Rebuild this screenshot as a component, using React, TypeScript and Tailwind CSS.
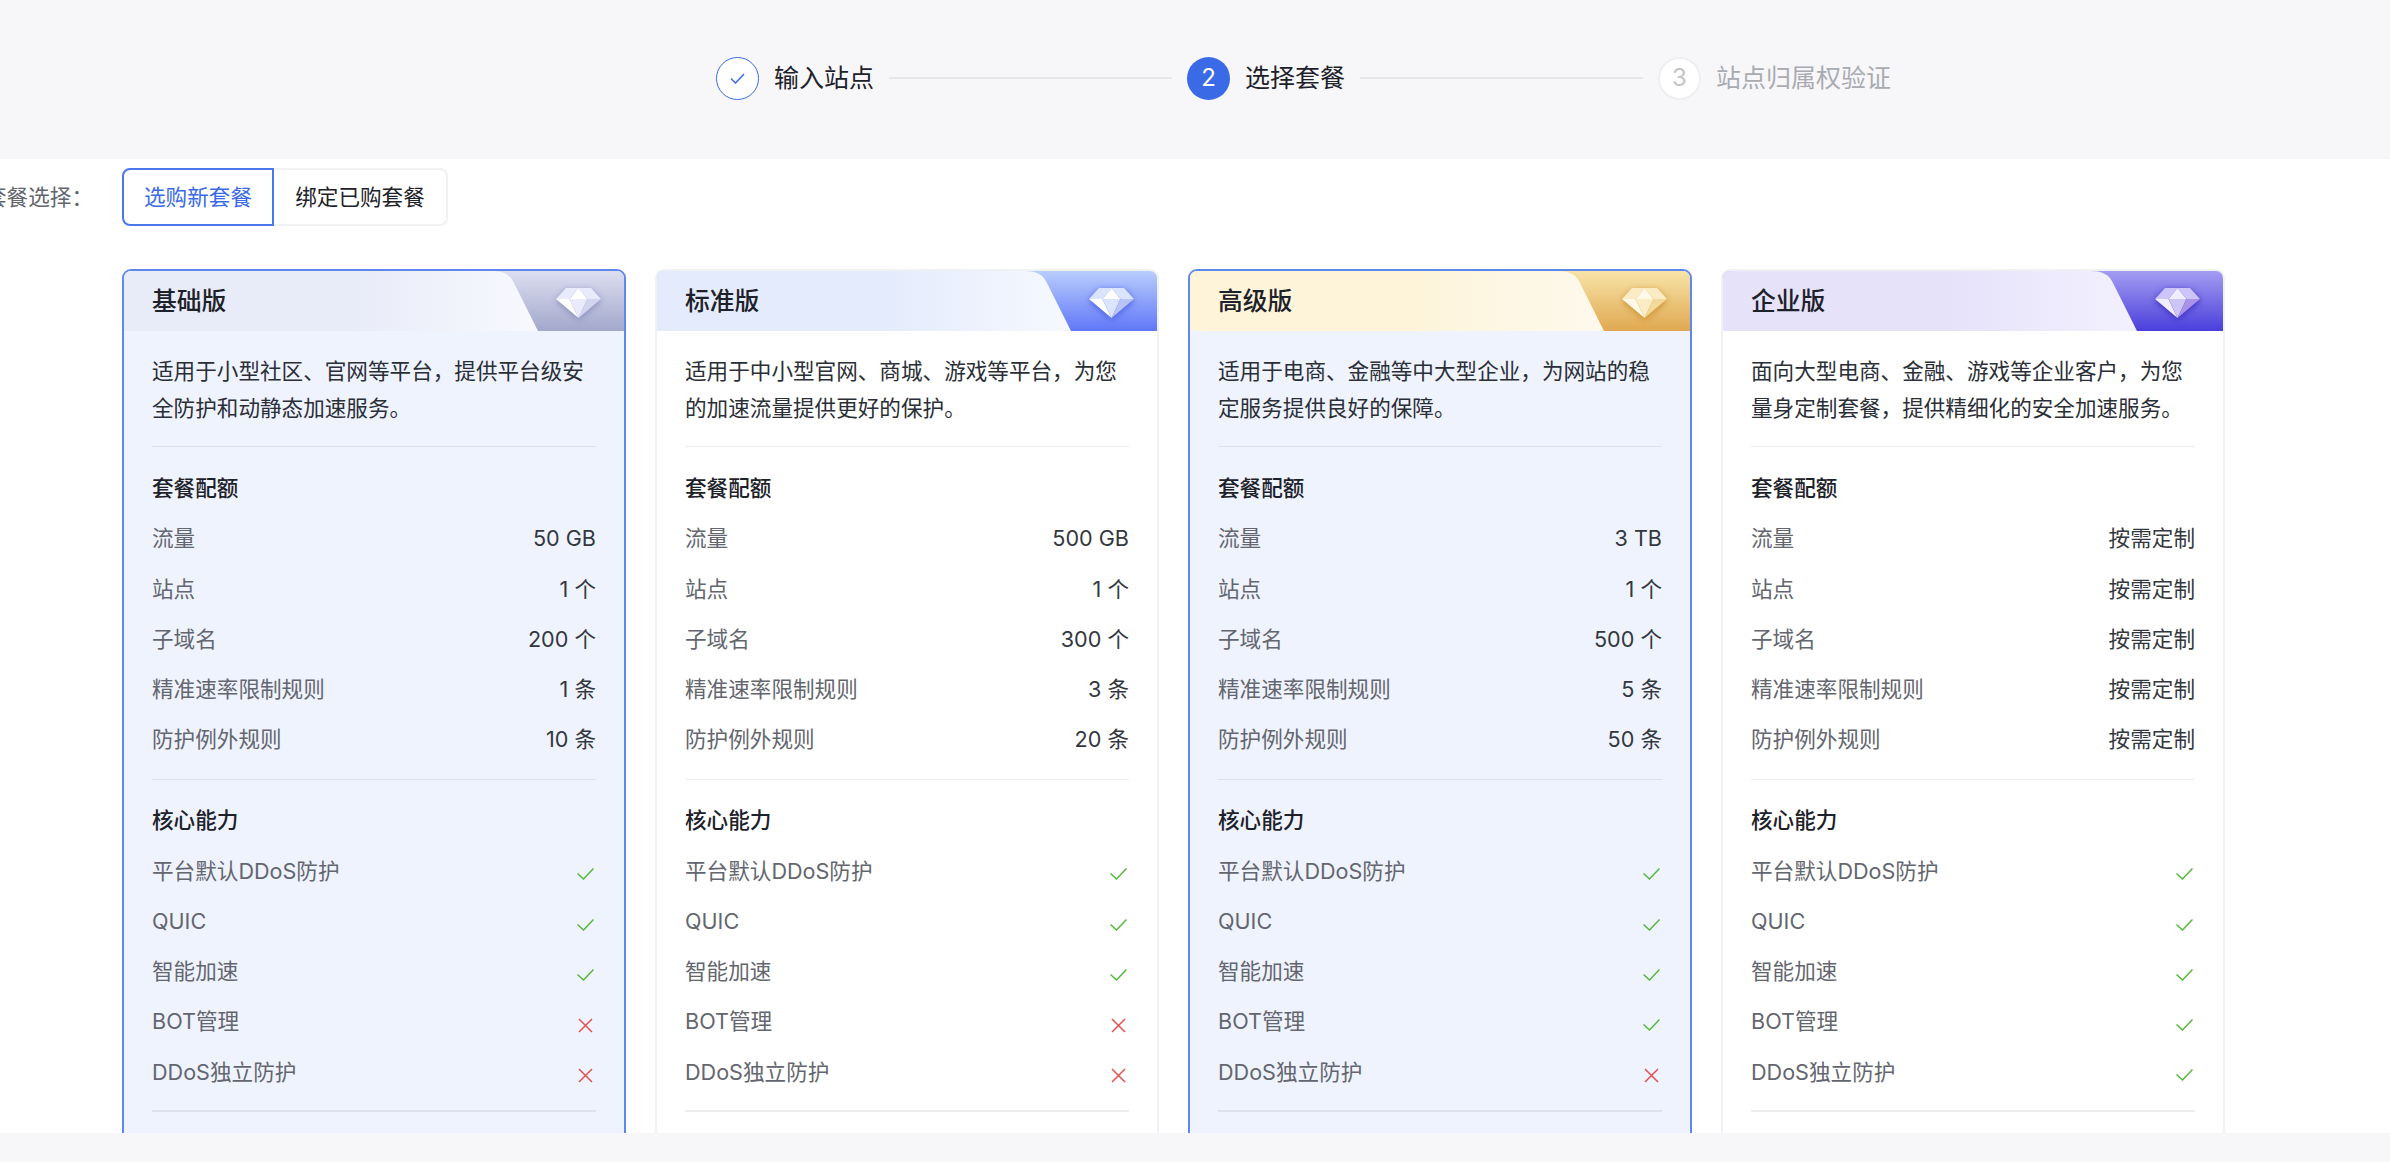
const FONT = "font-['Inter','Noto_Sans_CJK_SC',sans-serif]"

interface Plan {
  id: string
  name: string
  desc: string[]
  selected: boolean
  quota: string[]
  caps: boolean[]
  leftFrom: string
  leftTo: string
  cornerTop: string
  cornerBottom: string
  gemLight: string
  gemMid: string
  gemDark: string
  gemShadow: string
}

const plans: Plan[] = [
  {
    id: 'basic',
    name: '基础版',
    desc: ['适用于小型社区、官网等平台，提供平台级安', '全防护和动静态加速服务。'],
    selected: true,
    quota: ['50 GB', '1 个', '200 个', '1 条', '10 条'],
    caps: [true, true, true, false, false],
    leftFrom: '#e8ebf8',
    leftTo: '#f8f9fe',
    cornerTop: '#dcdef0',
    cornerBottom: '#a3a8cb',
    gemLight: '#ffffff',
    gemMid: '#e9eafc',
    gemDark: '#d3d5ee',
    gemShadow: '#8a8fc0',
  },
  {
    id: 'standard',
    name: '标准版',
    desc: ['适用于中小型官网、商城、游戏等平台，为您', '的加速流量提供更好的保护。'],
    selected: false,
    quota: ['500 GB', '1 个', '300 个', '3 条', '20 条'],
    caps: [true, true, true, false, false],
    leftFrom: '#e4ebfc',
    leftTo: '#f6f9ff',
    cornerTop: '#b9cdfc',
    cornerBottom: '#6077f8',
    gemLight: '#ffffff',
    gemMid: '#dbe4fd',
    gemDark: '#b9c3f8',
    gemShadow: '#4a5fe0',
  },
  {
    id: 'advanced',
    name: '高级版',
    desc: ['适用于电商、金融等中大型企业，为网站的稳', '定服务提供良好的保障。'],
    selected: true,
    quota: ['3 TB', '1 个', '500 个', '5 条', '50 条'],
    caps: [true, true, true, true, false],
    leftFrom: '#fdf4da',
    leftTo: '#fef9ed',
    cornerTop: '#f7e4a8',
    cornerBottom: '#e0a850',
    gemLight: '#fff9e8',
    gemMid: '#fbecc6',
    gemDark: '#f3d999',
    gemShadow: '#c98f30',
  },
  {
    id: 'enterprise',
    name: '企业版',
    desc: ['面向大型电商、金融、游戏等企业客户，为您', '量身定制套餐，提供精细化的安全加速服务。'],
    selected: false,
    quota: ['按需定制', '按需定制', '按需定制', '按需定制', '按需定制'],
    caps: [true, true, true, true, true],
    leftFrom: '#e5e2fa',
    leftTo: '#f3f1fe',
    cornerTop: '#a39df1',
    cornerBottom: '#4a3fdc',
    gemLight: '#f1edff',
    gemMid: '#cdc4f7',
    gemDark: '#a893e6',
    gemShadow: '#3a2fc0',
  },
]

const quotaLabels = ['流量', '站点', '子域名', '精准速率限制规则', '防护例外规则']
const capLabels = ['平台默认DDoS防护', 'QUIC', '智能加速', 'BOT管理', 'DDoS独立防护']

function Check() {
  return (
    <svg width="17" height="12" viewBox="0 0 17 12" fill="none" className="mt-[7px] mr-[2px]">
      <path d="M0.5 5.5L6.5 11L16.5 0.5" stroke="#55b83c" strokeWidth="1.5" />
    </svg>
  )
}

function Cross() {
  return (
    <svg width="15" height="15" viewBox="0 0 15 15" fill="none" className="mt-[7px] mr-[3px]">
      <path d="M1 1L14 14M14 1L1 14" stroke="#e5504f" strokeWidth="1.5" />
    </svg>
  )
}

function Gem({ plan }: { plan: Plan }) {
  return (
    <svg
      width="45"
      height="30"
      viewBox="0 0 45 30"
      className="absolute left-[432px] top-[17px]"
      style={{ filter: `drop-shadow(0 2px 3px ${plan.gemShadow})` }}
    >
      <path d="M10 0H22.5L13.5 11H0Z" fill={plan.gemMid} />
      <path d="M35 0H22.5L31.5 11H45Z" fill={plan.gemMid} />
      <path d="M22.5 0L31.5 11H13.5Z" fill={plan.gemLight} />
      <path d="M0 11H13.5L22.5 30Z" fill={plan.gemLight} />
      <path d="M13.5 11H31.5L22.5 30Z" fill={plan.gemMid} />
      <path d="M31.5 11H45L22.5 30Z" fill={plan.gemDark} />
    </svg>
  )
}

function CardHeader({ plan }: { plan: Plan }) {
  return (
    <div className="relative flex h-[60px] items-center pl-[28px]">
      <svg className="absolute inset-0 h-full w-full" viewBox="0 0 500 60" preserveAspectRatio="none">
        <defs>
          <linearGradient id={`${plan.id}-corner`} x1="0" y1="0" x2="0" y2="1">
            <stop offset="0" stopColor={plan.cornerTop} />
            <stop offset="1" stopColor={plan.cornerBottom} />
          </linearGradient>
          <linearGradient id={`${plan.id}-left`} gradientUnits="userSpaceOnUse" x1="0" y1="0" x2="414" y2="0">
            <stop offset="0.55" stopColor={plan.leftFrom} />
            <stop offset="1" stopColor={plan.leftTo} />
          </linearGradient>
        </defs>
        <rect width="500" height="60" fill={`url(#${plan.id}-corner)`} />
        <path d="M0 0H367C379 0 386 3 390 12L414 60H0Z" fill={`url(#${plan.id}-left)`} />
      </svg>
      <Gem plan={plan} />
      <span className="relative pt-[2px] text-[24.8px] font-medium text-[#1d2129]">{plan.name}</span>
    </div>
  )
}

function Row({ label, children }: { label: string; children: React.ReactNode }) {
  return (
    <div className="flex h-[50.3px] items-center justify-between text-[21.6px]">
      <span className="text-[#63666e]">{label}</span>
      {children}
    </div>
  )
}

function SectionTitle({ children }: { children: React.ReactNode }) {
  return <div className="flex h-[50.3px] items-center text-[21.6px] font-medium text-[#1d2129]">{children}</div>
}

function PlanCard({ plan }: { plan: Plan }) {
  return (
    <div
      className={`h-[900px] w-[504px] shrink-0 overflow-hidden rounded-[9px] border-2 ${
        plan.selected ? 'border-[#5f88ec] bg-[#eff3fe]' : 'border-[#f0f1f3] bg-white'
      }`}
    >
      <CardHeader plan={plan} />
      <div className="px-[28px] pt-[22px]">
        <div className="text-[21.6px] leading-[36.5px] text-[#2a2e36]">
          {plan.desc.map((line) => (
            <div key={line} className="whitespace-nowrap">
              {line}
            </div>
          ))}
        </div>
        <div className="mt-[19.5px] h-[1.5px] bg-black/[0.07]" />

        <div className="mt-[16px]">
          <SectionTitle>套餐配额</SectionTitle>
          {quotaLabels.map((label, i) => (
            <Row key={label} label={label}>
              <span className="text-[#33373e]">{plan.quota[i]}</span>
            </Row>
          ))}
        </div>
        <div className="mt-[14px] h-[1.5px] bg-black/[0.07]" />

        <div className="mt-[15px]">
          <SectionTitle>核心能力</SectionTitle>
          {capLabels.map((label, i) => (
            <Row key={label} label={label}>
              {plan.caps[i] ? <Check /> : <Cross />}
            </Row>
          ))}
        </div>
        <div className="mt-[13px] h-[1.5px] bg-black/[0.07]" />
      </div>
    </div>
  )
}

function Stepper() {
  return (
    <div className="flex h-[159px] items-center bg-[#f7f7fa] pb-[3px] pl-[716px] text-[25px]">
      <div className="flex h-[43px] w-[43px] items-center justify-center rounded-full border border-[#3a6ae6] bg-white">
        <svg width="15" height="11" viewBox="0 0 15 11" fill="none">
          <path d="M1 5.5L5.5 10L14 1" stroke="#3a6ae6" strokeWidth="1.5" />
        </svg>
      </div>
      <span className="ml-[15px] pt-[2px] text-[#1d2129]">输入站点</span>
      <div className="mx-[15px] h-[2px] w-[283px] bg-[#e6e7ea]" />
      <div className="flex h-[43px] w-[43px] items-center justify-center rounded-full bg-[#3a6ae6] text-[24px] text-white">
        2
      </div>
      <span className="ml-[15px] pt-[2px] text-[#1d2129]">选择套餐</span>
      <div className="mx-[15px] h-[2px] w-[283px] bg-[#e6e7ea]" />
      <div className="flex h-[43px] w-[43px] items-center justify-center rounded-full border-2 border-[#eeeff1] bg-white text-[24px] text-[#c2c4c9]">
        3
      </div>
      <span className="ml-[15px] pt-[2px] text-[#a9abb1]">站点归属权验证</span>
    </div>
  )
}

export default function App() {
  return (
    <div className={`h-[1176px] w-[2390px] overflow-hidden bg-white ${FONT}`}>
      <Stepper />
      <div className="h-[974px] overflow-hidden">
        <div className="mt-[9px] flex h-[58px] items-center text-[21.6px]">
          <div className="flex w-[122px] shrink-0 justify-end overflow-hidden pr-[29px] whitespace-nowrap text-[#63666e]">
            套餐选择：
          </div>
          <div className="flex h-full w-[152px] items-center justify-center rounded-l-[8px] border-2 border-[#4a77ea] text-[#3a6ae6]">
            选购新套餐
          </div>
          <div className="flex h-full w-[174px] items-center justify-center rounded-r-[8px] border-2 border-l-0 border-[#f0f1f3] text-[#1d2129]">
            绑定已购套餐
          </div>
        </div>
        <div className="mt-[43px] flex gap-[29px] pl-[122px]">
          {plans.map((plan) => (
            <PlanCard key={plan.id} plan={plan} />
          ))}
        </div>
      </div>
      <div className="h-[29px] bg-[#f7f7fa]" />
    </div>
  )
}
